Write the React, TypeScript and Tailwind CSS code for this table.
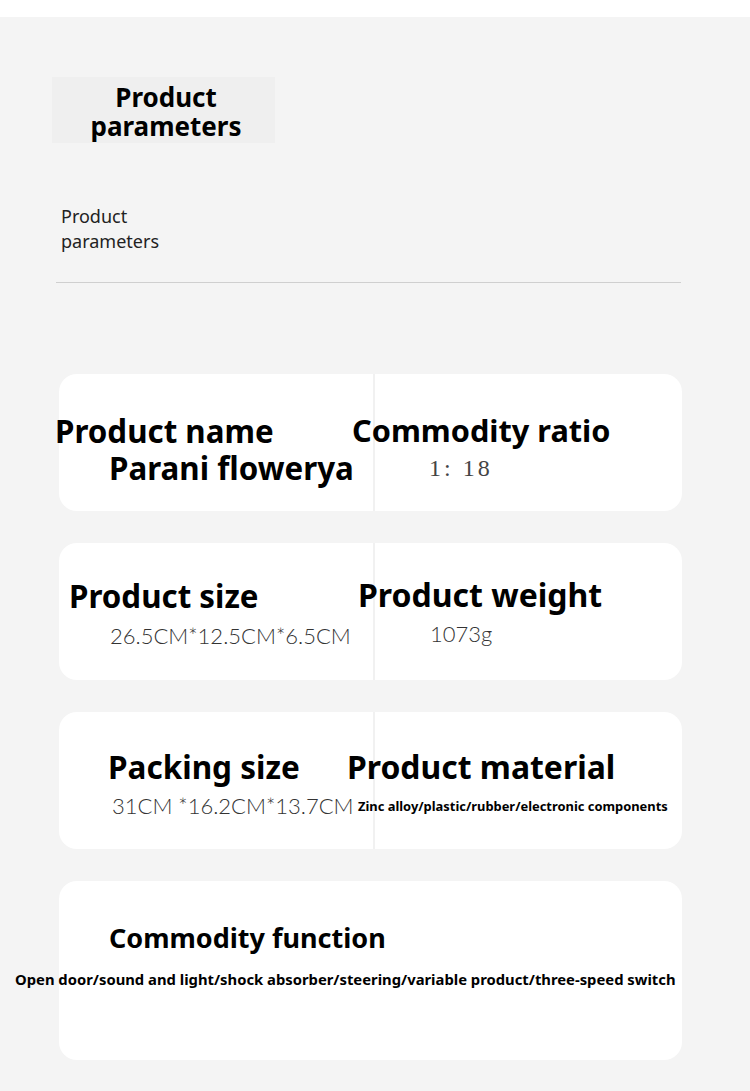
import React from 'react';

const sans = { fontFamily: '"Noto Sans", "Open Sans", sans-serif' };
const thin = { fontFamily: 'Lato, "Open Sans", sans-serif' };
const serif = { fontFamily: '"Liberation Serif", serif' };

type Cell = {
    title: string;
    titleClass: string;
    value: string;
    valueClass: string;
    valueFont: React.CSSProperties;
};

const ParamCell: React.FC<{ cell: Cell; pad: string }> = ({ cell, pad }) => (
    <div className={`flex flex-col ${pad}`}>
        <p className={`whitespace-nowrap leading-[37px] font-bold text-black ${cell.titleClass}`} style={sans}>
            {cell.title}
        </p>
        <p className={`whitespace-nowrap ${cell.valueClass}`} style={cell.valueFont}>
            {cell.value}
        </p>
    </div>
);

const rows: { left: Cell; right: Cell; pad: string }[] = [
    {
        pad: 'pt-[39px]',
        left: {
            title: 'Product name',
            titleClass: 'ml-[-4px] text-[31.3px]',
            value: 'Parani flowerya',
            valueClass: 'ml-[50px] text-[31.3px] leading-[37px] font-bold text-black',
            valueFont: sans,
        },
        right: {
            title: 'Commodity ratio',
            titleClass: 'ml-[-23px] mt-[-1px] text-[30.7px]',
            value: '1: 18',
            valueClass: 'ml-[54px] text-[24px] leading-[38px] tracking-[3px] font-light text-[#444]',
            valueFont: serif,
        },
    },
    {
        pad: 'pt-[35px]',
        left: {
            title: 'Product size',
            titleClass: 'ml-[10px] text-[31.3px]',
            value: '26.5CM*12.5CM*6.5CM',
            valueClass: 'ml-[51px] text-[22px] leading-[41px] font-light text-[#333]',
            valueFont: thin,
        },
        right: {
            title: 'Product weight',
            titleClass: 'ml-[-17px] mt-[-2px] text-[32px]',
            value: '1073g',
            valueClass: 'ml-[55px] text-[22px] leading-[41px] font-light text-[#333]',
            valueFont: thin,
        },
    },
    {
        pad: 'pt-[36px]',
        left: {
            title: 'Packing size',
            titleClass: 'ml-[49px] text-[31.5px]',
            value: '31CM *16.2CM*13.7CM',
            valueClass: 'ml-[53px] text-[22px] leading-[41px] font-light text-[#333]',
            valueFont: thin,
        },
        right: {
            title: 'Product material',
            titleClass: 'ml-[-28px] text-[31.9px]',
            value: 'Zinc alloy/plastic/rubber/electronic components',
            valueClass: 'ml-[-17px] text-[12.9px] leading-[42px] font-bold text-black',
            valueFont: sans,
        },
    },
];

const App: React.FC = () => {
    return (
        <div className="w-[750px] min-h-[1091px] bg-[#f4f4f4]" style={sans}>
            <div className="h-[17px] bg-white" />

            <div className="pt-[60px] pl-[52px]">
                <div className="w-[223px] h-[66px] bg-[#efefef] flex flex-col items-center justify-center pl-[5px] pt-[4px]">
                    <p className="text-[26px] leading-[29px] font-bold text-black text-center">Product</p>
                    <p className="text-[26px] leading-[29px] font-bold text-black text-center">parameters</p>
                </div>
            </div>

            <p className="mt-[61px] ml-[61px] text-[18px] leading-[25px] text-[#222]">
                Product
                <br />
                parameters
            </p>

            <div className="mx-[56px] w-[625px] mt-[28px] h-px bg-[#cfcfcf]" />

            <div className="mt-[91px] ml-[59px] w-[623px] flex flex-col gap-[32px]">
                {rows.map((row) => (
                    <div key={row.left.title} className="h-[137px] bg-white rounded-[18px] grid grid-cols-[314px_2px_307px]">
                        <ParamCell cell={row.left} pad={row.pad} />
                        <div className="bg-[#f1f1f1]" />
                        <ParamCell cell={row.right} pad={row.pad} />
                    </div>
                ))}

                <div className="h-[179px] bg-white rounded-[18px] pt-[38px] flex flex-col">
                    <p className="ml-[50px] whitespace-nowrap text-[27px] leading-[37px] font-bold text-black">
                        Commodity function
                    </p>
                    <p className="ml-[-44px] mt-[9px] whitespace-nowrap text-[14.8px] leading-[28px] font-bold text-black">
                        Open door/sound and light/shock absorber/steering/variable product/three-speed switch
                    </p>
                </div>
            </div>
        </div>
    );
};

export default App;
